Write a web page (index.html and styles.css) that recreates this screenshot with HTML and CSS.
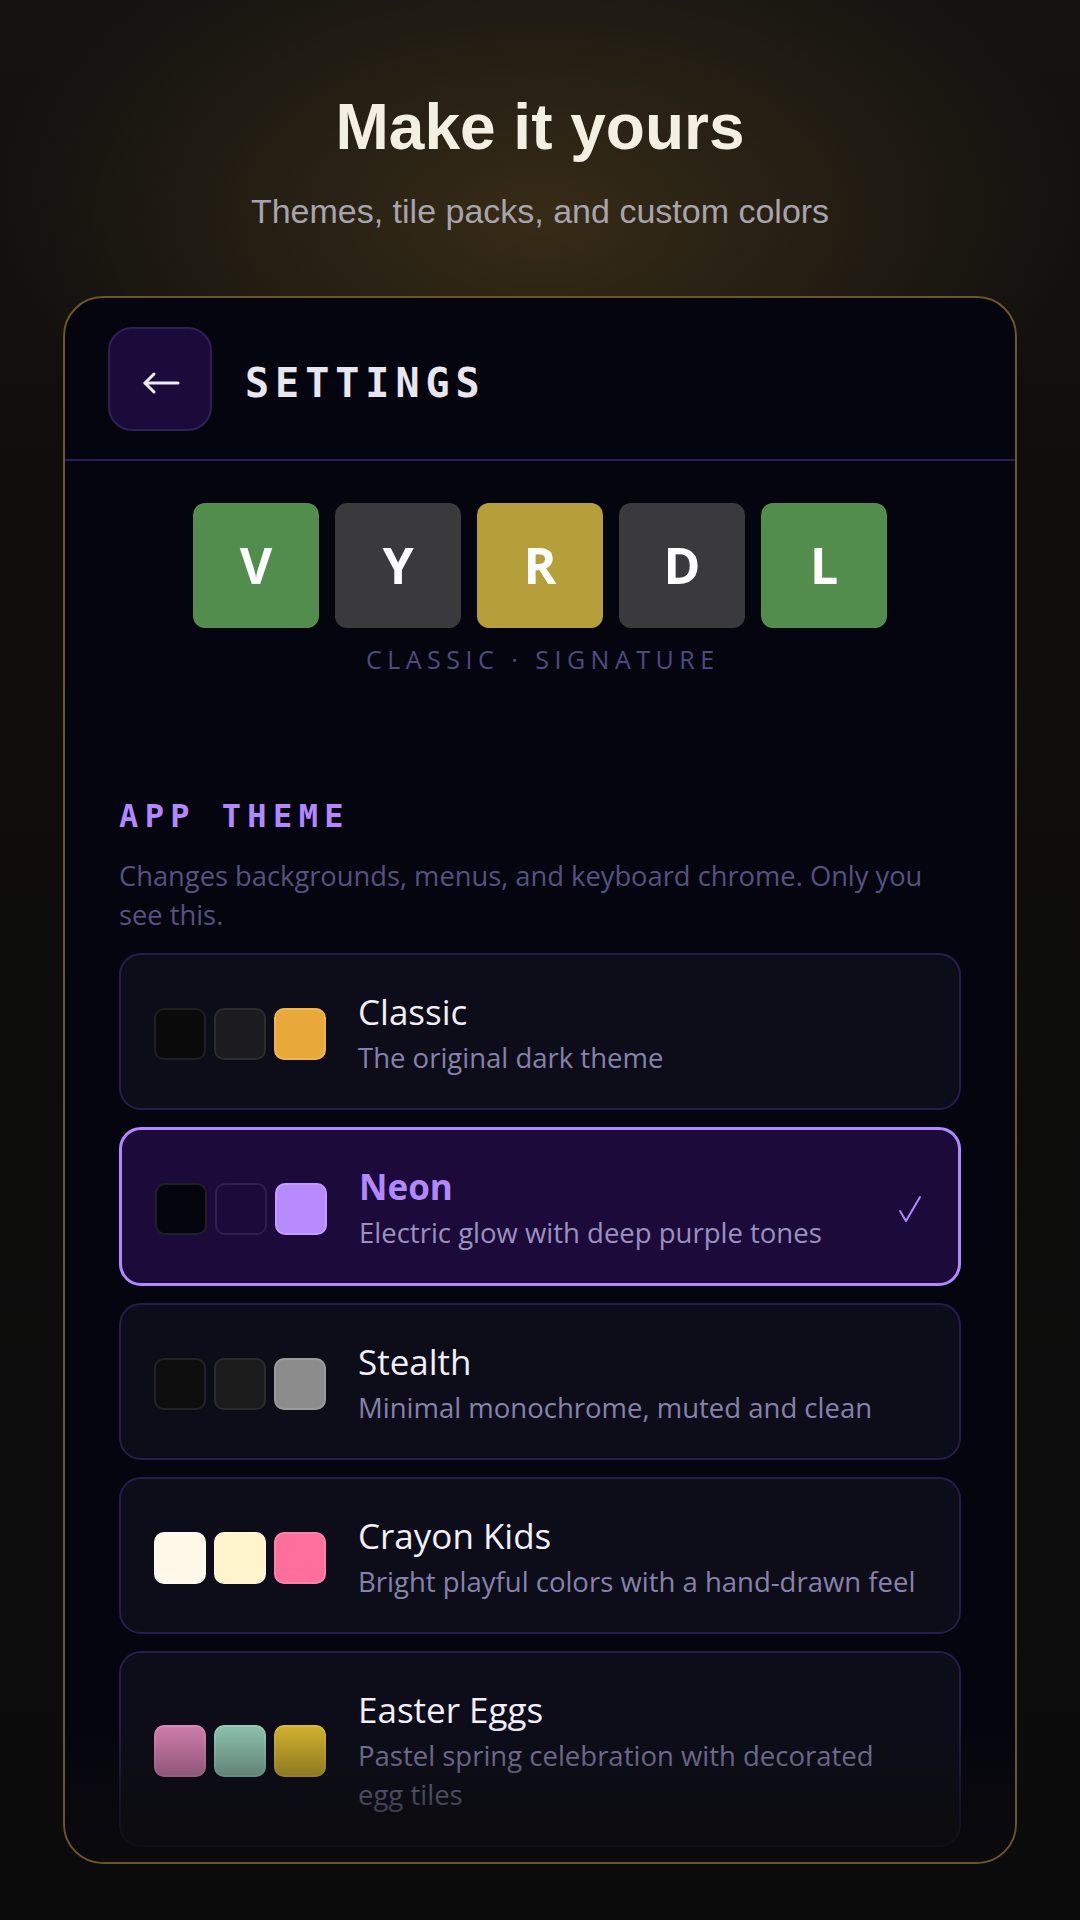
FILE: index.html
```html
<!DOCTYPE html>
<html lang="en">
<head>
    <meta charset="UTF-8">
    <meta name="viewport" content="width=device-width, initial-scale=1.0">
    <title>Make it yours - Settings</title>
    <link rel="stylesheet" href="styles.css">
</head>
<body>
    <div class="hero">
        <h1>Make it yours</h1>
        <p>Themes, tile packs, and custom colors</p>
    </div>

    <div class="device">
        <header class="topbar">
            <button class="back-btn" aria-label="Back">
                <svg width="38" height="24" viewBox="0 0 38 24" fill="none" stroke="#eeebf6" stroke-width="3" stroke-linecap="round" stroke-linejoin="round">
                    <line x1="3" y1="12" x2="36" y2="12"/>
                    <polyline points="12,3 3,12 12,21"/>
                </svg>
            </button>
            <h2 class="topbar-title">SETTINGS</h2>
        </header>

        <div class="screen">
            <div class="preview">
                <div class="tiles">
                    <div class="tile tile-green">V</div>
                    <div class="tile tile-gray">Y</div>
                    <div class="tile tile-yellow">R</div>
                    <div class="tile tile-gray">D</div>
                    <div class="tile tile-green">L</div>
                </div>
                <div class="preview-label">CLASSIC · SIGNATURE</div>
            </div>

            <section class="group">
                <h3 class="group-title">APP THEME</h3>
                <p class="group-desc">Changes backgrounds, menus, and keyboard chrome. Only you see this.</p>

                <div class="theme-list">
                    <div class="theme-card">
                        <div class="swatches">
                            <span class="swatch sw-classic-1"></span>
                            <span class="swatch sw-classic-2"></span>
                            <span class="swatch sw-classic-3"></span>
                        </div>
                        <div class="theme-text">
                            <div class="theme-name">Classic</div>
                            <div class="theme-desc">The original dark theme</div>
                        </div>
                    </div>

                    <div class="theme-card is-active">
                        <div class="swatches">
                            <span class="swatch sw-neon-1"></span>
                            <span class="swatch sw-neon-2"></span>
                            <span class="swatch sw-neon-3"></span>
                        </div>
                        <div class="theme-text">
                            <div class="theme-name">Neon</div>
                            <div class="theme-desc">Electric glow with deep purple tones</div>
                        </div>
                        <svg class="check" width="24" height="28" viewBox="0 0 24 28" fill="none" stroke="#b388ff" stroke-width="2" stroke-linecap="round" stroke-linejoin="round">
                            <polyline points="2,16 8,26 22,2"/>
                        </svg>
                    </div>

                    <div class="theme-card">
                        <div class="swatches">
                            <span class="swatch sw-stealth-1"></span>
                            <span class="swatch sw-stealth-2"></span>
                            <span class="swatch sw-stealth-3"></span>
                        </div>
                        <div class="theme-text">
                            <div class="theme-name">Stealth</div>
                            <div class="theme-desc">Minimal monochrome, muted and clean</div>
                        </div>
                    </div>

                    <div class="theme-card">
                        <div class="swatches">
                            <span class="swatch sw-crayon-1"></span>
                            <span class="swatch sw-crayon-2"></span>
                            <span class="swatch sw-crayon-3"></span>
                        </div>
                        <div class="theme-text">
                            <div class="theme-name">Crayon Kids</div>
                            <div class="theme-desc">Bright playful colors with a hand-drawn feel</div>
                        </div>
                    </div>

                    <div class="theme-card">
                        <div class="swatches">
                            <span class="swatch sw-easter-1"></span>
                            <span class="swatch sw-easter-2"></span>
                            <span class="swatch sw-easter-3"></span>
                        </div>
                        <div class="theme-text">
                            <div class="theme-name">Easter Eggs</div>
                            <div class="theme-desc">Pastel spring celebration with decorated egg tiles</div>
                        </div>
                    </div>
                </div>
            </section>
        </div>
    </div>
</body>
</html>
```

FILE: styles.css
```css
body {
    margin: 0;
    min-height: 1920px;
    font-family: 'Open Sans', 'Noto Sans', sans-serif;
    background:
        radial-gradient(ellipse 560px 320px at 50% 220px, rgba(64, 50, 24, 0.8), rgba(20, 18, 15, 0) 100%),
        linear-gradient(#141311 0, #0f0e0d 500px, #0b0b0b 100%);
    color: #f1eff8;
}

.hero {
    text-align: center;
    padding-top: 91px;
}

.hero h1 {
    margin: 0;
    font-family: 'Liberation Sans', Arial, sans-serif;
    font-size: 64px;
    line-height: 1.15;
    font-weight: 700;
    color: #f3efe3;
}

.hero p {
    margin: 27px 0 0;
    font-family: 'Liberation Sans', Arial, sans-serif;
    font-size: 34px;
    line-height: 1.15;
    color: #a8a4ad;
}

.device {
    position: relative;
    margin: 65px 63px 0;
    height: 1568px;
    box-sizing: border-box;
    border: 2px solid #6c5527;
    border-radius: 40px;
    background: #05050f;
    overflow: hidden;
}

/* fade at the bottom of the scrolling list */
.device::after {
    content: '';
    position: absolute;
    left: 0;
    right: 0;
    bottom: 0;
    height: 140px;
    background: linear-gradient(rgba(11, 11, 12, 0), rgba(11, 11, 12, 0.92));
    pointer-events: none;
}

.topbar {
    display: flex;
    align-items: center;
    gap: 33px;
    padding: 29px 43px 28px;
    border-bottom: 2px solid #2c1d57;
}

.back-btn {
    width: 104px;
    height: 104px;
    box-sizing: border-box;
    padding: 8px 0 0 2px;
    border: 2px solid #2f2059;
    border-radius: 24px;
    background: #1b0b3b;
    display: flex;
    align-items: center;
    justify-content: center;
    cursor: pointer;
}

.topbar-title {
    margin: 8px 0 0;
    font-family: 'DejaVu Sans Mono', monospace;
    font-weight: 700;
    font-size: 40px;
    letter-spacing: 0.15em;
    color: #e8e6f1;
}

.screen {
    padding: 42px 54px 0;
}

.tiles {
    display: flex;
    justify-content: center;
    gap: 16px;
}

.tile {
    width: 126px;
    height: 125px;
    border-radius: 12px;
    display: flex;
    align-items: center;
    justify-content: center;
    color: #fff;
    font-weight: 700;
    font-size: 50px;
}

.tile-green {
    background: #538d4e;
}

.tile-gray {
    background: #3a3a3c;
}

.tile-yellow {
    background: #b59f3b;
}

.preview-label {
    margin-top: 16px;
    padding-left: 0.22em;
    text-align: center;
    font-size: 25px;
    line-height: 30px;
    font-weight: 400;
    letter-spacing: 0.22em;
    color: #4d4c7e;
}

.group {
    margin-top: 123px;
}

.group-title {
    margin: 0;
    font-family: 'DejaVu Sans Mono', monospace;
    font-weight: 700;
    font-size: 32px;
    line-height: 38px;
    letter-spacing: 0.2em;
    color: #b388ff;
}

.group-desc {
    margin: 21px 0 0;
    max-width: 830px;
    font-size: 27.3px;
    line-height: 39px;
    color: #56517f;
}

.theme-list {
    margin-top: 19px;
    display: flex;
    flex-direction: column;
    gap: 17px;
}

.theme-card {
    display: flex;
    align-items: center;
    gap: 32px;
    padding: 36px 36px 31px 33px;
    border: 2px solid #281c4c;
    border-radius: 22px;
    background: #0d0d1a;
}

.theme-card.is-active {
    border: 3px solid #b388ff;
    background: #1c0b3a;
}

.swatches {
    display: flex;
    gap: 8px;
    flex-shrink: 0;
}

.swatch {
    width: 52px;
    height: 52px;
    box-sizing: border-box;
    border: 2px solid rgba(255, 255, 255, 0.08);
    border-radius: 10px;
}

.theme-text {
    flex: 1;
}

.theme-name {
    font-size: 35px;
    line-height: 42px;
    color: #f1eff8;
}

.is-active .theme-name {
    font-weight: 700;
    color: #b388ff;
}

.theme-desc {
    margin-top: 5px;
    max-width: 564px;
    font-size: 27.5px;
    line-height: 39px;
    color: #8682aa;
}

.is-active .theme-desc {
    color: #9a91bf;
}

.check {
    flex-shrink: 0;
}

.sw-classic-1 { background: #0a0a0a; border-color: #1f1f21; }
.sw-classic-2 { background: #1c1c1e; border-color: #2c2c2e; }
.sw-classic-3 { background: #e9a93a; border-color: #f0b54c; }

.sw-neon-1 { background: #05050d; border-color: #1f1f27; }
.sw-neon-2 { background: #1c0b3a; border-color: #2e2052; }
.sw-neon-3 { background: #b78bfb; border-color: #c29cff; }

.sw-stealth-1 { background: #0e0e0e; border-color: #222224; }
.sw-stealth-2 { background: #1b1b1b; border-color: #2b2b2d; }
.sw-stealth-3 { background: #8c8c8c; border-color: #9a9a9a; }

.sw-crayon-1 { background: #fff8e8; border-color: #fffaf0; }
.sw-crayon-2 { background: #fff4cc; border-color: #fff7d8; }
.sw-crayon-3 { background: #ff6f9c; border-color: #ff80a8; }

.sw-easter-1 { background: #d680b1; border-color: #de8cba; }
.sw-easter-2 { background: #90c6b0; border-color: #9ccfba; }
.sw-easter-3 { background: #d6b62e; border-color: #dcbe40; }
```
